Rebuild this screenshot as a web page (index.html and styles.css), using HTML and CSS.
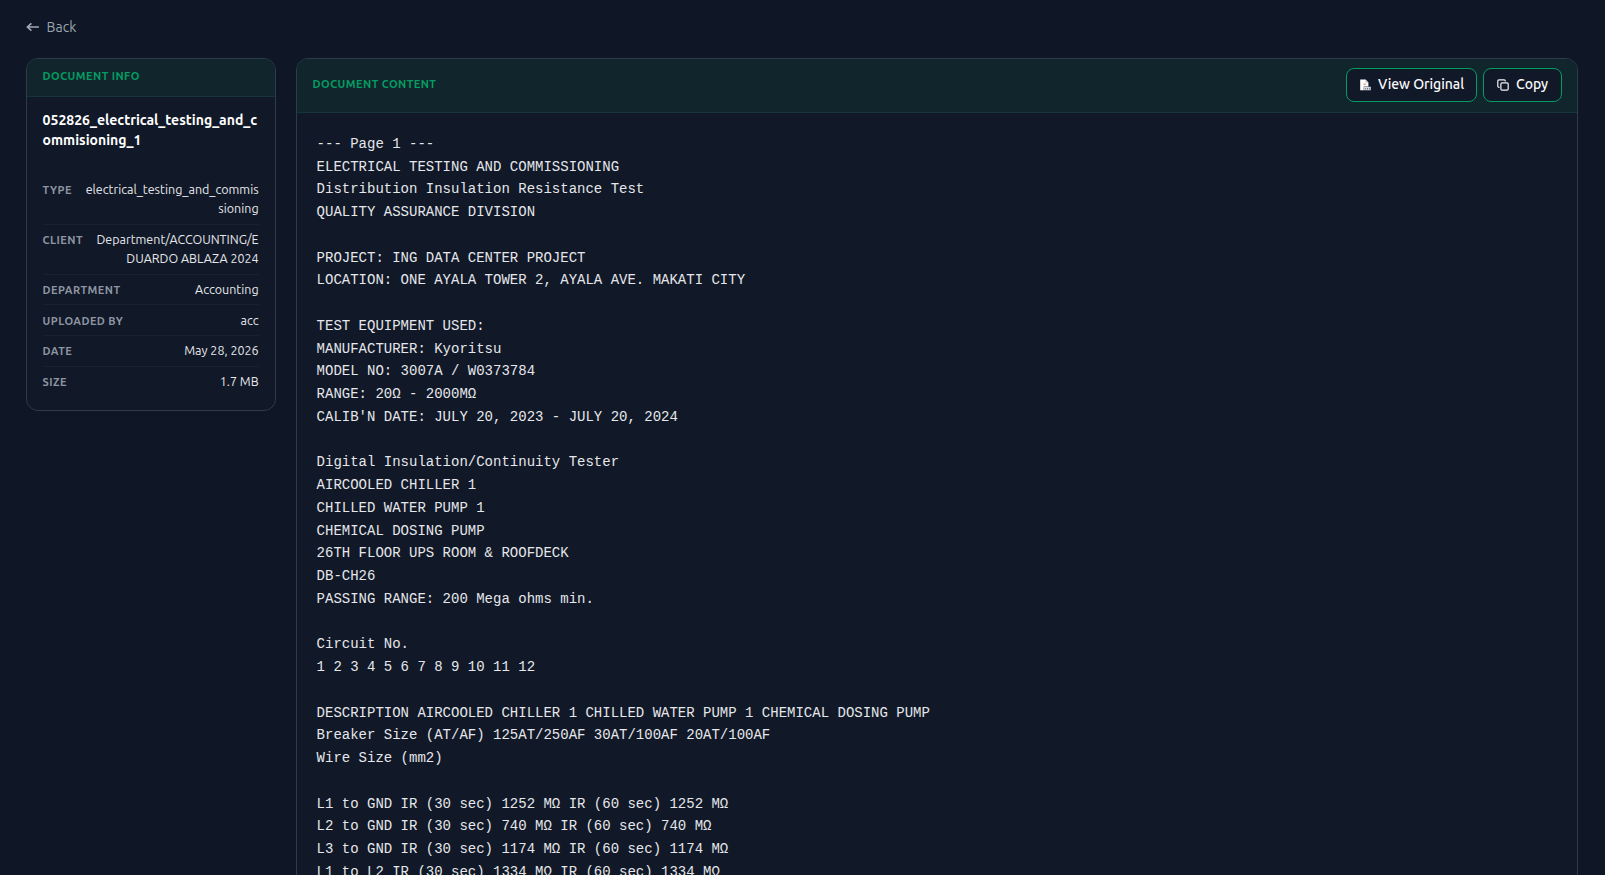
FILE: index.html
```html
<!DOCTYPE html>
<html lang="en">
<head>
<meta charset="utf-8">
<title>Document</title>
<link rel="stylesheet" href="styles.css">
</head>
<body>
<div class="page">
  <a class="back"><svg class="back-icon" viewBox="0 0 14 14"><path d="M12.9 7H1.4M5.4 3.4L1.4 7l4 3.6"/></svg><span>Back</span></a>
  <div class="layout">
    <aside class="card info">
      <div class="card-head info-head"><h2 class="heading">DOCUMENT INFO</h2></div>
      <div class="info-body">
        <h1 class="title">052826_electrical_testing_and_c<br>ommisioning_1</h1>
        <dl class="rows">
          <div class="row tall"><dt>TYPE</dt><dd>electrical_testing_and_commis<br>sioning</dd></div>
          <div class="row tall"><dt>CLIENT</dt><dd>Department/ACCOUNTING/E<br>DUARDO ABLAZA 2024</dd></div>
          <div class="row"><dt>DEPARTMENT</dt><dd>Accounting</dd></div>
          <div class="row"><dt>UPLOADED BY</dt><dd>acc</dd></div>
          <div class="row"><dt>DATE</dt><dd>May 28, 2026</dd></div>
          <div class="row"><dt>SIZE</dt><dd>1.7 MB</dd></div>
        </dl>
      </div>
    </aside>
    <main class="card content">
      <div class="card-head content-head">
        <h2 class="heading">DOCUMENT CONTENT</h2>
        <div class="actions">
          <button class="btn view"><svg class="file-icon" viewBox="0 0 12 12"><path d="M1.2.5h5.4L9.4 3.4v4H4.7v3.8H1.2z" fill="#fff"/><path d="M6.6.5v3h2.8z" fill="#b9bdc5"/><path d="M4.6 5.2h2.2" stroke="#e0604c"/><path d="M4.6 7.8h7.2v3.4H4.6z" fill="#d5d8dd"/><path d="M5.8 9.8h1M8 9.8h1M10.2 9.8h.8" stroke="#3b4353"/></svg><span>View Original</span></button>
          <button class="btn copy"><svg class="copy-icon" viewBox="0 0 12 12"><rect x="3.9" y="3.9" width="7.3" height="7.3" rx="1.2"/><path d="M2.5 8.3H2a1.2 1.2 0 0 1-1.2-1.2V2A1.2 1.2 0 0 1 2 .8h5.1A1.2 1.2 0 0 1 8.3 2v.5"/></svg><span>Copy</span></button>
        </div>
      </div>
<pre class="text">--- Page 1 ---
ELECTRICAL TESTING AND COMMISSIONING
Distribution Insulation Resistance Test
QUALITY ASSURANCE DIVISION

PROJECT: ING DATA CENTER PROJECT
LOCATION: ONE AYALA TOWER 2, AYALA AVE. MAKATI CITY

TEST EQUIPMENT USED:
MANUFACTURER: Kyoritsu
MODEL NO: 3007A / W0373784
RANGE: 20Ω - 2000MΩ
CALIB'N DATE: JULY 20, 2023 - JULY 20, 2024

Digital Insulation/Continuity Tester
AIRCOOLED CHILLER 1
CHILLED WATER PUMP 1
CHEMICAL DOSING PUMP
26TH FLOOR UPS ROOM &amp; ROOFDECK
DB-CH26
PASSING RANGE: 200 Mega ohms min.

Circuit No.
1 2 3 4 5 6 7 8 9 10 11 12

DESCRIPTION AIRCOOLED CHILLER 1 CHILLED WATER PUMP 1 CHEMICAL DOSING PUMP
Breaker Size (AT/AF) 125AT/250AF 30AT/100AF 20AT/100AF
Wire Size (mm2)

L1 to GND IR (30 sec) 1252 MΩ IR (60 sec) 1252 MΩ
L2 to GND IR (30 sec) 740 MΩ IR (60 sec) 740 MΩ
L3 to GND IR (30 sec) 1174 MΩ IR (60 sec) 1174 MΩ
L1 to L2 IR (30 sec) 1334 MΩ IR (60 sec) 1334 MΩ</pre>
    </main>
  </div>
</div>
</body>
</html>
```
FILE: styles.css
```css
* { box-sizing: border-box; margin: 0; padding: 0; }
body {
  height: 875px;
  overflow: hidden;
  background: #0f1726;
  color: #e5e7eb;
  font-family: Ubuntu, "Noto Sans", sans-serif;
}
.page { padding: 16px 27px 0 25.6px; }
.back {
  display: flex;
  align-items: center;
  gap: 7px;
  height: 22px;
  color: #9ca3af;
  font-size: 14px;
}
.back-icon { width: 14px; height: 14px; fill: none; stroke: #a3abb7; stroke-width: 1.6; }
.layout { display: flex; align-items: flex-start; gap: 20px; margin-top: 19.6px; }
.card { border: 1px solid #2d3b4a; border-radius: 12px; background: #111827; overflow: hidden; }
.info { width: 250px; flex: none; }
.content { flex: 1; height: 900px; }
.card-head { background: #10262c; border-bottom: 1px solid #15353a; }
.info-head { height: 38.6px; padding: 9px 16px; }
.content-head { display: flex; align-items: center; justify-content: space-between; height: 54.6px; padding: 0 15px 2px 16px; }
.heading { color: #059c62; font-size: 11px; line-height: 17px; font-weight: 700; letter-spacing: 0.44px; white-space: nowrap; }
.info-body { padding: 12.4px 16px 14px; }
.title { color: #fff; font-size: 14px; line-height: 20px; font-weight: 700; white-space: nowrap; }
.rows { margin-top: 25.3px; }
.row { display: flex; justify-content: space-between; padding: 5.3px 0; border-bottom: 1px solid #172130; }
.row.tall { padding: 5.5px 0; }
.row:last-child { border-bottom: 0; }
dt { color: #8d95a3; font-size: 11px; line-height: 20.6px; font-weight: 700; letter-spacing: 0.44px; white-space: nowrap; margin-bottom: -1.6px; }
dd { font-size: 12.5px; line-height: 19px; text-align: right; white-space: nowrap; }
.actions { display: flex; gap: 6px; margin-top: 1.6px; }
.btn {
  display: flex;
  align-items: center;
  height: 34px;
  padding: 0 0 2px 12px;
  border: 1px solid #059c62;
  border-radius: 8px;
  background: #111827;
  color: #f9fafb;
  font: 500 14px Ubuntu, "Noto Sans", sans-serif;
  letter-spacing: -0.04px;
  white-space: nowrap;
}
.view { width: 131px; gap: 7px; }
.copy { width: 79px; gap: 7px; padding-left: 13px; }
.file-icon { width: 12px; height: 12px; margin-top: 2px; }
.copy-icon { width: 12px; height: 12px; margin-top: 1px; fill: none; stroke: #f3f4f6; stroke-width: 1.2; }
.text { padding: 19.6px 20px; color: #e5e7eb; font-family: "Liberation Mono", monospace; font-size: 14px; line-height: 22.75px; }
```
